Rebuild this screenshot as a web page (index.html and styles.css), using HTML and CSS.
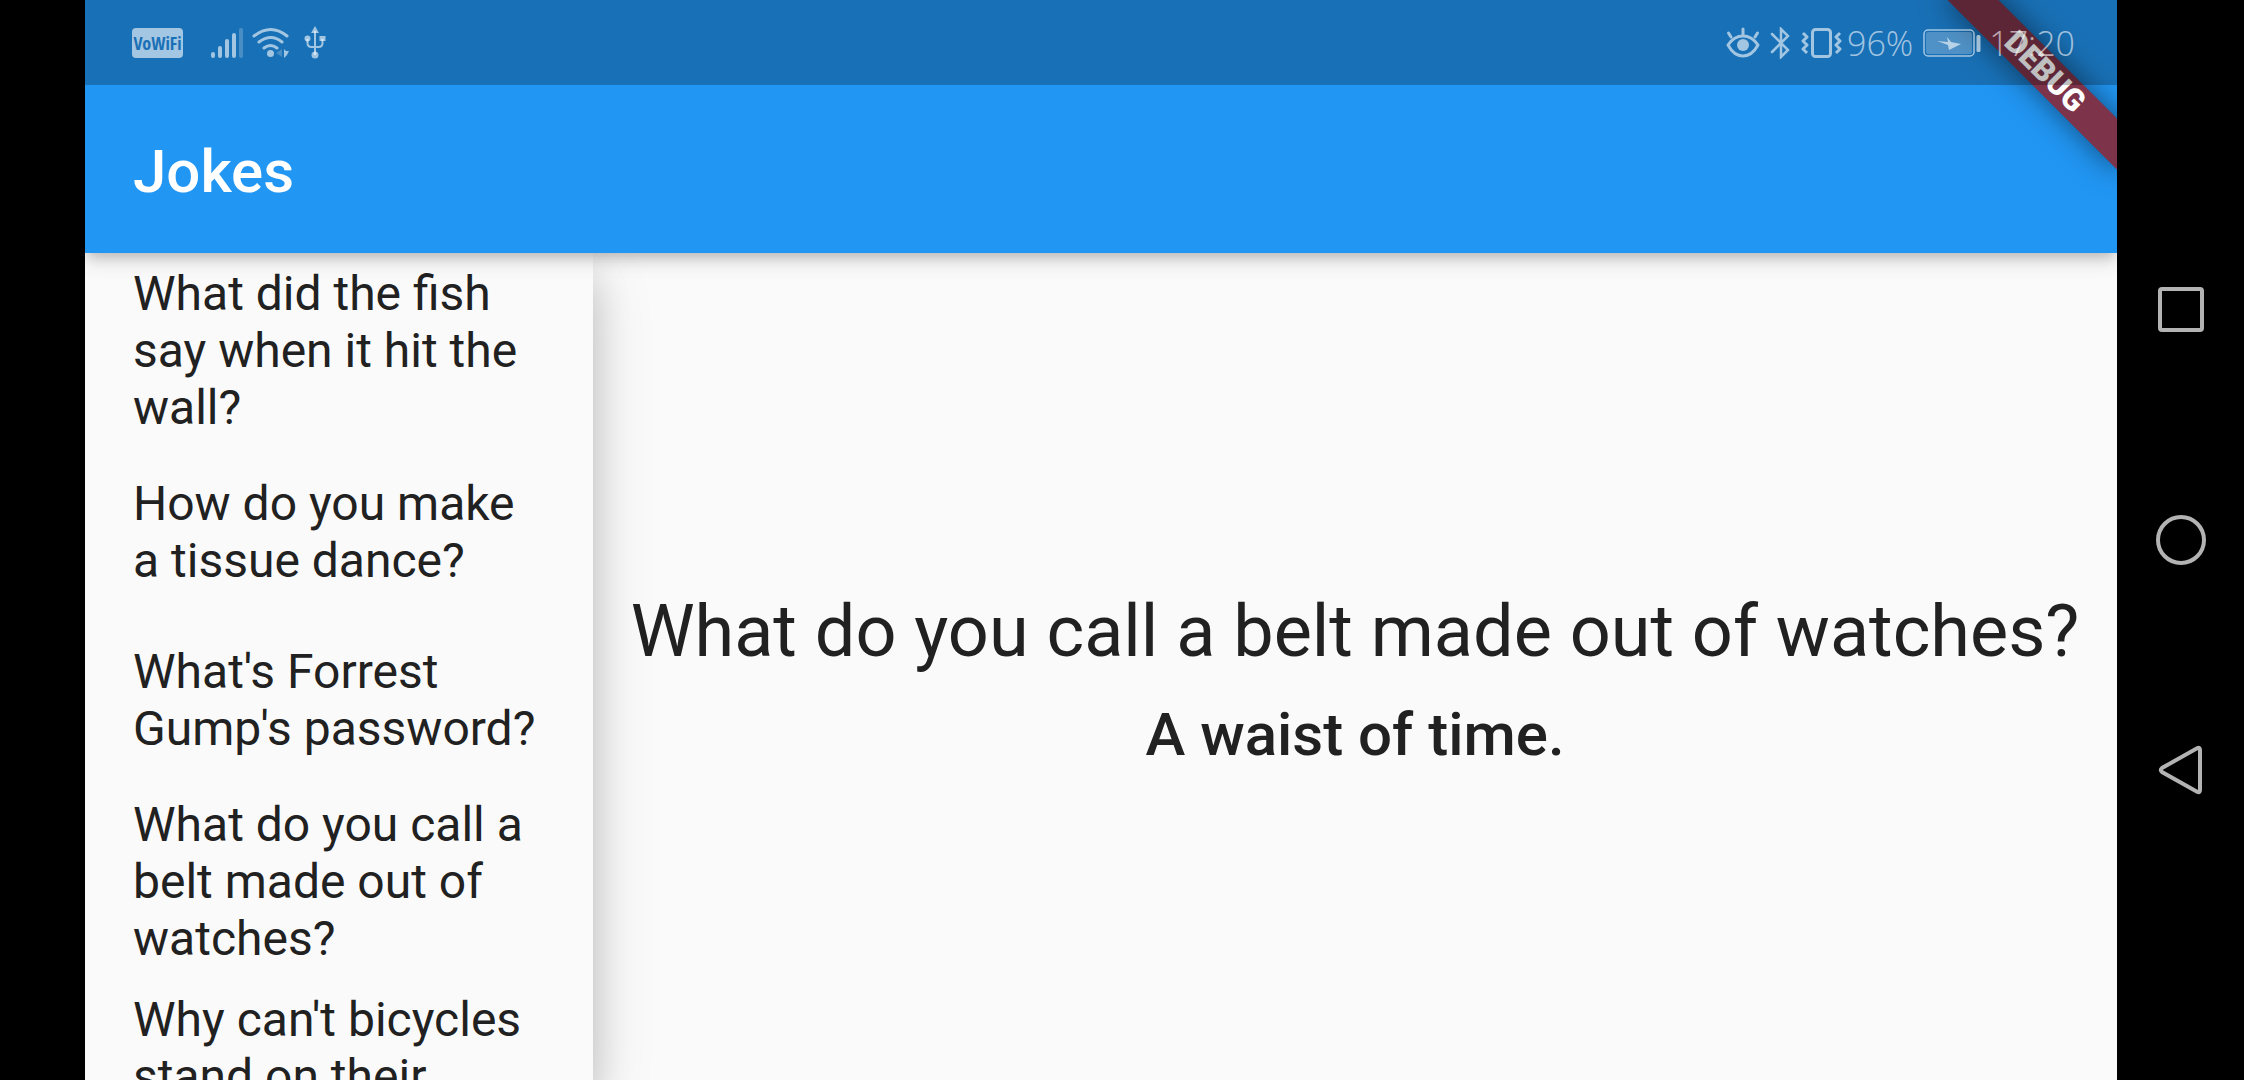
FILE: index.html
```html
<!DOCTYPE html>
<html lang="en">
<head>
  <meta charset="utf-8">
  <meta name="viewport" content="width=device-width, initial-scale=1">
  <title>Jokes</title>
  <link rel="stylesheet" href="styles.css">
</head>
<body>
  <div class="app">
    <div class="status-bar">
      <div class="status-group">
        <span class="vowifi">VoWiFi</span>
        <svg class="icon-signal" width="34" height="32" viewBox="0 0 34 32" aria-hidden="true">
          <g stroke="currentColor" stroke-width="4" stroke-linecap="round">
            <path d="M3 27v2M10 21v8M17 14v15M24 8v21"/>
            <path d="M31 3v26" opacity=".35"/>
          </g>
        </svg>
        <svg class="icon-wifi" width="38" height="32" viewBox="0 0 38 32" aria-hidden="true">
          <g fill="none" stroke="currentColor" stroke-width="3" stroke-linecap="round">
            <path d="M2 9q17-13 33 0M7 15q12-9 23 0M12 21q6.500-5 13 0"/>
          </g>
          <circle cx="18.500" cy="26.500" r="3.500" fill="currentColor"/>
          <path d="M30 22v8l-6-4z" fill="currentColor" opacity=".35"/>
          <path d="M32 22l2 2h3l-2 4-3 3z" fill="currentColor"/>
        </svg>
        <svg class="icon-usb" width="22" height="33" viewBox="0 0 22 33" aria-hidden="true">
          <g fill="none" stroke="currentColor" stroke-width="2">
            <path d="M11 5v24M3.500 13v4q0 4 4 4h7q4 0 4-4v-4"/>
          </g>
          <g fill="currentColor">
            <path d="M11 0l4 7H7zM15.500 10h6v5h-6z"/>
            <circle cx="3.500" cy="12.500" r="3"/>
            <circle cx="11" cy="29" r="3.500"/>
          </g>
        </svg>
      </div>
      <div class="status-group">
        <svg class="icon-eye" width="34" height="32" viewBox="0 0 34 32" aria-hidden="true">
          <g fill="none" stroke="currentColor" stroke-width="3" stroke-linecap="round" stroke-linejoin="round">
            <path d="M2 18q6-9 15-9t15 9q-6 11-15 11T2 18zM17 2v6M2.500 6L5 10M31.500 6L29 10"/>
          </g>
          <circle cx="17" cy="18" r="6" fill="currentColor"/>
        </svg>
        <svg class="icon-bluetooth" width="21" height="32" viewBox="0 0 21 32" aria-hidden="true">
          <path d="M2 7l16 16-7 7V2l7 7L2 25" fill="none" stroke="currentColor" stroke-width="2.500" stroke-linecap="round"/>
        </svg>
        <svg class="icon-vibrate" width="41" height="32" viewBox="0 0 41 32" aria-hidden="true">
          <rect x="11.500" y="2.500" width="18" height="27" rx="3" fill="none" stroke="currentColor" stroke-width="3"/>
          <path d="M2 6l4 4-4 4 4 4-4 4 4 4M39 6l-4 4 4 4-4 4 4 4-4 4" fill="none" stroke="currentColor" stroke-width="3" stroke-linejoin="round"/>
        </svg>
        <span class="battery-level">96%</span>
        <svg class="icon-battery" width="58" height="28" viewBox="0 0 58 28" aria-hidden="true">
          <rect x="1" y="1" width="50" height="26" rx="4" fill="none" stroke="currentColor" stroke-width="1.500"/>
          <rect x="3" y="3" width="46" height="22" rx="2" fill="currentColor" opacity=".4"/>
          <path d="M24 8l4 5 10 2-12 6-1-5-11-4 11 1z" fill="currentColor"/>
          <rect x="53.500" y="6" width="4" height="17" rx="1.500" fill="currentColor"/>
        </svg>
        <time class="clock">17:20</time>
      </div>
    </div>

    <header class="app-bar">
      <h1 class="app-title">Jokes</h1>
    </header>

    <div class="content">
      <nav class="joke-list" aria-label="Jokes">
        <button class="joke" type="button">What did the fish say when it hit the wall?</button>
        <button class="joke" type="button">How do you make a tissue dance?</button>
        <button class="joke" type="button">What's Forrest Gump's password?</button>
        <button class="joke" type="button">What do you call a belt made out of watches?</button>
        <button class="joke" type="button">Why can't bicycles stand on their own?</button>
      </nav>
      <main class="detail">
        <h2 class="setup">What do you call a belt made out of watches?</h2>
        <p class="punchline">A waist of time.</p>
      </main>
    </div>

    <div class="debug-banner">DEBUG</div>
  </div>

  <div class="system-nav">
    <button class="nav-button" type="button" aria-label="Recent apps">
      <svg width="50" height="50" viewBox="0 0 50 50"><rect x="4" y="4" width="42" height="41" rx="2"/></svg>
    </button>
    <button class="nav-button" type="button" aria-label="Home">
      <svg width="50" height="50" viewBox="0 0 50 50"><circle cx="25" cy="25" r="23"/></svg>
    </button>
    <button class="nav-button" type="button" aria-label="Back">
      <svg width="50" height="50" viewBox="0 0 50 50"><path d="M41.500 3Q44 2 44 5v40q0 3-2.500 2L6 27q-2.500-2 0-4z"/></svg>
    </button>
  </div>
</body>
</html>
```

FILE: styles.css
```css
* {
  box-sizing: border-box;
}

body {
  margin: 0;
  height: 100vh;
  display: flex;
  padding-left: 85px;
  background: #000;
  color: #212121;
  font-family: Roboto, sans-serif;
  overflow: hidden;
}

.app {
  position: relative;
  flex: 1;
  min-width: 0;
  display: flex;
  flex-direction: column;
  background: #fafafa;
  overflow: hidden;
}

/* The status bar tints whatever is under it, including the banner. */
.status-bar {
  position: relative;
  z-index: 4;
  flex: none;
  height: 85px;
  display: flex;
  align-items: center;
  justify-content: space-between;
  padding: 0 42px 0 47px;
  background: rgba(0, 0, 0, 0.25);
  color: rgba(255, 255, 255, 0.6);
}

.status-group {
  display: flex;
  align-items: center;
}

.vowifi {
  width: 51px;
  height: 30px;
  margin-right: 27px;
  border-radius: 4px;
  background: #a3c6e2;
  color: #1a70b6;
  font: bold 18px/30px "Liberation Sans Narrow", "Open Sans Condensed", Roboto, sans-serif;
  text-align: center;
}

.icon-wifi {
  margin: 0 14px 0 8px;
}

.icon-bluetooth {
  margin: 0 10px;
}

.battery-level,
.clock {
  font: 300 34px/40px "Open Sans", "Noto Sans", sans-serif;
}

.battery-level {
  margin: 0 10px 0 5px;
}

.clock {
  margin-left: 8px;
}

.app-bar {
  position: relative;
  z-index: 2;
  flex: none;
  height: 253px;
  margin-top: -85px;
  padding: 90px 48px 0;
  display: flex;
  align-items: center;
  background: #2196f3;
  box-shadow: 0 6px 12px -3px rgba(0, 0, 0, 0.2), 0 12px 15px rgba(0, 0, 0, 0.06), 0 3px 30px rgba(0, 0, 0, 0.06);
}

.app-title {
  margin: 0;
  color: #fff;
  font-size: 60px;
  line-height: 70px;
  font-weight: 500;
}

.content {
  flex: 1;
  min-height: 0;
  display: flex;
}

.joke-list {
  position: relative;
  z-index: 1;
  flex: 0 0 25%;
  background: #fafafa;
  box-shadow: 0 24px 36px rgba(0, 0, 0, 0.16), 0 24px 60px rgba(0, 0, 0, 0.14);
}

.joke {
  display: flex;
  align-items: center;
  width: 100%;
  min-height: 168px;
  padding: 12px 48px;
  border: 0;
  background: none;
  color: inherit;
  font-family: inherit;
  font-size: 48px;
  line-height: 57px;
  text-align: left;
}

.detail {
  flex: 1;
  display: flex;
  flex-direction: column;
  align-items: center;
  justify-content: center;
  gap: 26px;
  padding: 26px 24px 0;
  text-align: center;
}

.setup,
.punchline {
  margin: 0;
}

.setup {
  font-size: 72px;
  line-height: 84px;
  font-weight: 400;
}

.punchline {
  font-size: 60px;
  line-height: 70px;
  font-weight: 500;
}

.debug-banner {
  position: absolute;
  z-index: 3;
  top: 54px;
  right: -48px;
  width: 240px;
  height: 36px;
  background: #7d3349;
  box-shadow: 0 0 30px rgba(0, 0, 0, 0.5);
  color: #fff;
  font-size: 31px;
  line-height: 36px;
  font-weight: 900;
  text-align: center;
  transform: rotate(45deg);
}

.system-nav {
  flex: none;
  width: 127px;
  display: flex;
  flex-direction: column;
  align-items: center;
  justify-content: center;
  gap: 130px;
}

.nav-button {
  width: 100px;
  height: 100px;
  padding: 25px;
  border: 0;
  background: none;
}

.nav-button svg {
  display: block;
  fill: none;
  stroke: #b3b3b3;
  stroke-width: 4px;
}
```
